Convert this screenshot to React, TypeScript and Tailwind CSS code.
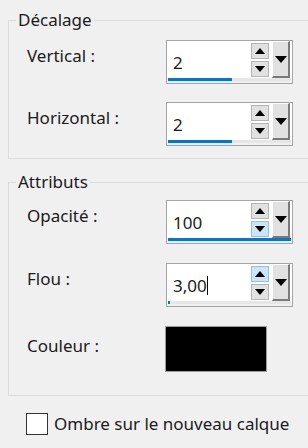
import React from 'react';

type Hl = 'up' | 'down' | null;

interface SpinProps {
  value: string;
  fill: number; // width of the blue bar in px
  hl?: Hl;
  caret?: boolean;
}

const Tri: React.FC<{ dir: 'up' | 'down'; w?: number; h?: number }> = ({ dir, w = 10, h = 6 }) => (
  <svg width={w} height={h} viewBox={`0 0 ${w} ${h}`}>
    {dir === 'up' ? (
      <polygon points={`0,${h} ${w / 2},0 ${w},${h}`} fill="#000" />
    ) : (
      <polygon points={`0,0 ${w},0 ${w / 2},${h}`} fill="#000" />
    )}
  </svg>
);

const SpinBtn: React.FC<{ dir: 'up' | 'down'; active: boolean }> = ({ dir, active }) => (
  <div
    className={`w-[18px] h-[16px] flex items-center justify-center border ${
      active ? 'bg-[#cce4f7] border-[#8ec1ef]' : 'bg-[#e1e1e1] border-[#b4b4b4]'
    }`}
  >
    <Tri dir={dir} />
  </div>
);

const SpinBox: React.FC<SpinProps> = ({ value, fill, hl = null, caret }) => (
  <div className="w-[127px] h-[44px] border border-[#a5a5a5] bg-white flex flex-col">
    <div className="flex h-[37px] shrink-0">
      <div className="flex-1 flex items-center pl-[6px] pt-[6px] text-[17px]">
        <span>{value}</span>
        {caret && <span className="w-px h-[19px] bg-black" />}
      </div>
      <div className="flex flex-col gap-[2px] mt-[2px]">
        <SpinBtn dir="up" active={hl === 'up'} />
        <SpinBtn dir="down" active={hl === 'down'} />
      </div>
      <div className="ml-[3px] mr-[2px] w-[18px] h-[37px] bg-[#e1e1e1] border-t border-l border-t-white border-l-white border-r-2 border-b-2 border-r-[#7a7a7a] border-b-[#7a7a7a] flex items-center justify-center">
        <Tri dir="down" w={12} h={7} />
      </div>
    </div>
    <div className="h-[3px] shrink-0 mx-px bg-[#e6e6e6] flex">
      <div className="h-full bg-[#0078d7]" style={{ width: fill }} />
    </div>
    <div className="h-[2px] shrink-0 bg-[#f0f0f0]" />
  </div>
);

const Row: React.FC<{ label: string; children: React.ReactNode; shift?: string }> = ({ label, children, shift = 'pb-[12px]' }) => (
  <div className="flex items-center">
    <div className={`w-[157px] pl-[18px] ${shift}`}>{label}</div>
    {children}
  </div>
);

export default function App() {
  return (
    <div
      className="w-[308px] h-[448px] overflow-hidden bg-[#f0f0f0] text-[#1b1b1b] text-[17px] leading-[24px]"
      style={{ fontFamily: '"Noto Sans", "Open Sans", sans-serif' }}
    >
      <fieldset className="ml-2 mt-[8px] w-[330px] border border-[#dcdcdc] px-0 pb-[12px]">
        <legend className="ml-[7px] px-[2px]">Décalage</legend>
        <div className="mt-[8px] flex flex-col gap-[18px]">
          <Row label="Vertical :">
            <SpinBox value="2" fill={64} />
          </Row>
          <Row label="Horizontal :">
            <SpinBox value="2" fill={64} />
          </Row>
        </div>
      </fieldset>

      <fieldset className="ml-2 mt-[11px] w-[330px] border border-[#dcdcdc] px-0 pb-[23px]">
        <legend className="ml-[7px] px-[2px]">Attributs</legend>
        <div className="mt-[6px] flex flex-col gap-[19px]">
          <Row label="Opacité :">
            <SpinBox value="100" fill={123} hl="down" />
          </Row>
          <Row label="Flou :">
            <SpinBox value="3,00" fill={2} hl="up" caret />
          </Row>
          <Row label="Couleur :" shift="pb-[6px]">
            <div className="ml-[-1px] w-[102px] h-[46px] bg-black border border-[#9a9a9a]" />
          </Row>
        </div>
      </fieldset>

      <div className="mt-[16px] ml-[26px] flex items-center gap-[6px]">
        <div className="w-[22px] h-[22px] bg-white border border-[#333]" />
        <span>Ombre sur le nouveau calque</span>
      </div>
    </div>
  );
}
